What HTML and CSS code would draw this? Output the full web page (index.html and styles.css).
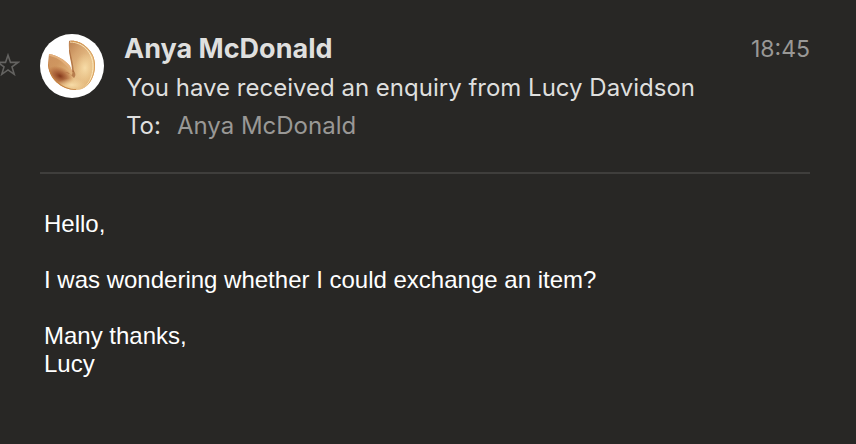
FILE: index.html
```html
<!DOCTYPE html>
<html lang="en">
<head>
<meta charset="utf-8">
<meta name="viewport" content="width=device-width, initial-scale=1">
<title>You have received an enquiry from Lucy Davidson</title>
<link rel="stylesheet" href="styles.css">
</head>
<body>
<main class="message">
  <header class="header">
    <button class="star" type="button" aria-label="Flag message">
      <svg viewBox="0 0 24 24" width="24" height="24" aria-hidden="true"><path d="M12 2.2 14.5 9.4H22L16 13.9 18.2 21.3 12 16.9 5.8 21.3 8 13.9 2 9.4H9.5Z"/></svg>
    </button>
    <svg class="avatar" viewBox="0 0 64 64" role="img" aria-label="Fortune cookie">
      <defs>
        <linearGradient id="base" x1="0" y1="0" x2="1" y2=".6">
          <stop offset="0" stop-color="#c88a5c"/><stop offset=".4" stop-color="#cf965f"/><stop offset=".7" stop-color="#e6bd83"/><stop offset="1" stop-color="#dfae6b"/>
        </linearGradient>
        <linearGradient id="right" x1="0" y1="0" x2=".7" y2="1">
          <stop offset="0" stop-color="#b97c4c"/><stop offset=".3" stop-color="#d6a46f"/><stop offset=".6" stop-color="#e8c18a"/><stop offset="1" stop-color="#e8c18a" stop-opacity="0"/>
        </linearGradient>
        <radialGradient id="shade"><stop offset="0" stop-color="#7f3216" stop-opacity=".95"/><stop offset=".5" stop-color="#9a4a26" stop-opacity=".6"/><stop offset="1" stop-color="#a95428" stop-opacity="0"/></radialGradient>
        <radialGradient id="glow"><stop offset="0" stop-color="#f7dca8"/><stop offset="1" stop-color="#f0cf94" stop-opacity="0"/></radialGradient>
        <clipPath id="cookie"><path d="M9 20C17 21 25 26 30 32L32 37C32 29 28 20 29 7 40 5 55 16 55 31 55 45 47 56 36 56 21 56 8 44 8 29Z"/></clipPath>
      </defs>
      <circle cx="32" cy="32" r="32" fill="#fff"/>
      <g clip-path="url(#cookie)">
        <rect width="64" height="64" fill="url(#base)"/>
        <path d="M29 5H58V58H40C34 52 33 45 33 37 32 28 28 20 29 5Z" fill="url(#right)"/>
        <ellipse cx="20" cy="42" rx="14" ry="9" transform="rotate(25 20 42)" fill="url(#shade)"/>
        <ellipse cx="45" cy="34" rx="10" ry="15" fill="url(#glow)"/>
        <ellipse cx="32" cy="51" rx="15" ry="7" fill="url(#glow)"/>
        <path d="M9 20C18 22 27 28 33 38" fill="none" stroke="#e3b07c" stroke-width="3"/>
        <path d="M30 8C43 8 53 19 53 32 53 41 50 48 45 53" fill="none" stroke="#fae6ba" stroke-width="1"/>
        <path d="M31 7C45 7 55 18 55 32 55 43 49 52 42 56" fill="none" stroke="#d69a55" stroke-width="1.5"/>
        <path d="M29 16C31 25 33 31 33 38" fill="none" stroke="#99592f" stroke-width="1.5" opacity=".6"/>
        <path d="M8 30C9 44 22 56 36 56" fill="none" stroke="#c58242" stroke-width="1.5"/>
        <path d="M25 38C29 38 31 41 34 44 36 42 36 39 33 36L32 41Z" fill="#9a552b" opacity=".6"/>
      </g>
    </svg>
    <div class="details">
      <div class="top">
        <h1 class="sender">Anya McDonald</h1>
        <time class="time" datetime="18:45">18:45</time>
      </div>
      <p class="subject">You have received an enquiry from Lucy Davidson</p>
      <p class="to">To: <span class="recipient">Anya McDonald</span></p>
    </div>
  </header>
  <article class="body">
    <p>Hello,</p>
    <p>I was wondering whether I could exchange an item?</p>
    <p>Many thanks,<br>Lucy</p>
  </article>
</main>
</body>
</html>
```
FILE: styles.css
```css
* { box-sizing: border-box; }

body {
  margin: 0;
  background: #282725;
  color: #dfdfde;
  font-family: Inter, sans-serif;
}

.message { padding: 29px 46px 40px 40px; }

.header {
  position: relative;
  display: flex;
  gap: 20px;
  padding-bottom: 27px;
  border-bottom: 2px solid #3f3e3c;
}

.star {
  position: absolute;
  left: -44px;
  top: 24px;
  padding: 0;
  border: 0;
  background: none;
  line-height: 0;
}

.star path { fill: none; stroke: #646361; stroke-width: 1.6; }

.avatar { flex: none; width: 64px; height: 64px; margin-top: 5px; }

.details { flex: 1; min-width: 0; }

.top { display: flex; justify-content: space-between; align-items: center; }

.sender, .time { line-height: 40px; }

.sender { margin: 0; font-size: 27px; font-weight: 700; }

.time { color: #999896; font-size: 23px; }

.subject, .to { margin: 0; padding-left: 2px; font-size: 24px; line-height: 38px; }

.to { display: flex; gap: 16px; }

.recipient { color: #999896; }

.body {
  padding: 36px 4px 0;
  color: #fff;
  font: 24px/28px "Liberation Sans", Arial, sans-serif;
}

.body p { margin: 0 0 28px; }
```
